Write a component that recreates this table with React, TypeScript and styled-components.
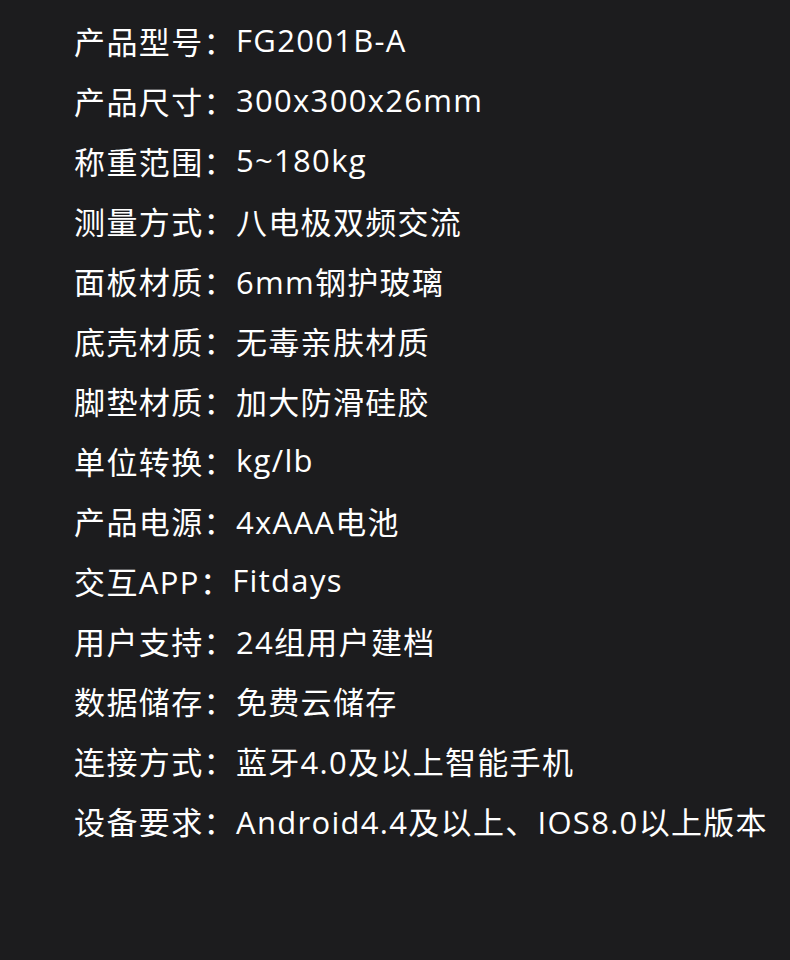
import React from 'react';
import styled, { createGlobalStyle } from 'styled-components';

const GlobalStyle = createGlobalStyle`
  html, body {
    margin: 0;
    padding: 0;
    background: #1c1c1e;
  }
`;

const Page = styled.div`
  width: 790px;
  height: 960px;
  background: #1c1c1e;
  box-sizing: border-box;
  padding: 10px 0 0 74px;
  display: flex;
  flex-direction: column;
  font-family: 'Open Sans', 'Noto Sans CJK SC', sans-serif;
  color: #ffffff;
`;

const Row = styled.div`
  height: 60px;
  display: flex;
  align-items: center;
  font-size: 31px;
  white-space: nowrap;
`;

const Label = styled.span`
  letter-spacing: 1.4px;
`;

const Value = styled.span`
  letter-spacing: 1.3px;
`;

const specs: [string, string][] = [
  ['产品型号：', 'FG2001B-A'],
  ['产品尺寸：', '300x300x26mm'],
  ['称重范围：', '5~180kg'],
  ['测量方式：', '八电极双频交流'],
  ['面板材质：', '6mm钢护玻璃'],
  ['底壳材质：', '无毒亲肤材质'],
  ['脚垫材质：', '加大防滑硅胶'],
  ['单位转换：', 'kg/lb'],
  ['产品电源：', '4xAAA电池'],
  ['交互APP：', 'Fitdays'],
  ['用户支持：', '24组用户建档'],
  ['数据储存：', '免费云储存'],
  ['连接方式：', '蓝牙4.0及以上智能手机'],
  ['设备要求：', 'Android4.4及以上、IOS8.0以上版本'],
];

export default function App() {
  return (
    <>
      <GlobalStyle />
      <Page>
        {specs.map(([label, value]) => (
          <Row key={label}>
            <Label>{label}</Label>
            <Value>{value}</Value>
          </Row>
        ))}
      </Page>
    </>
  );
}
